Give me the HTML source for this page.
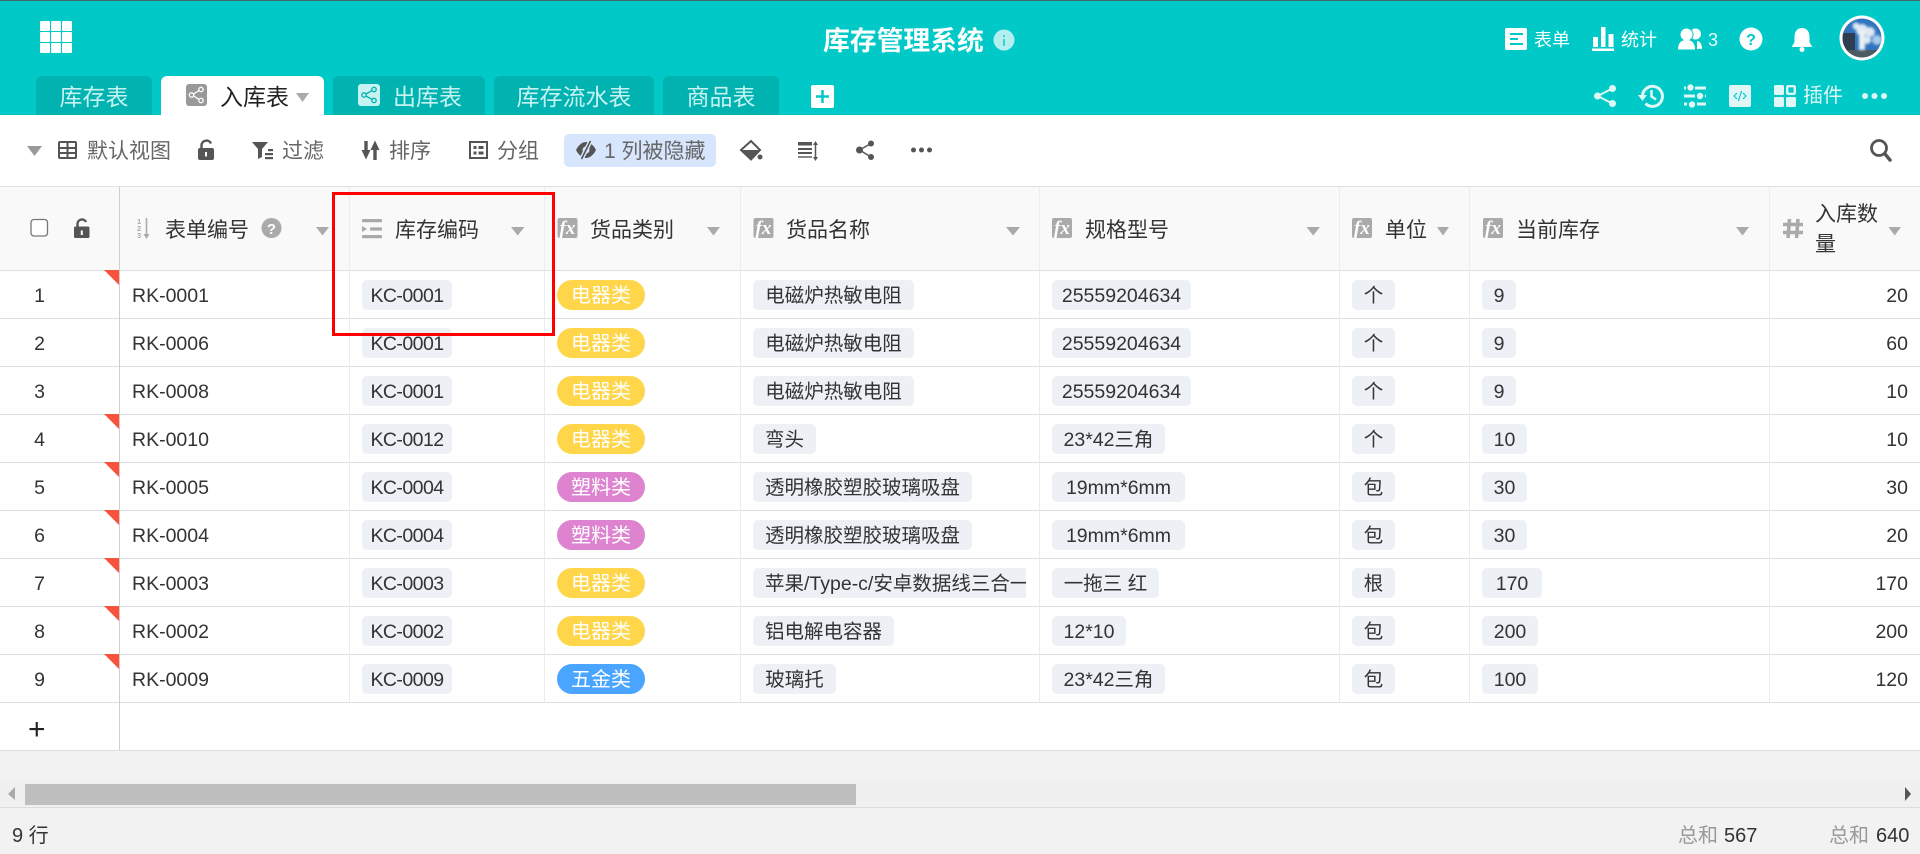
<!DOCTYPE html>
<html lang="zh-CN">
<head>
<meta charset="utf-8">
<title>库存管理系统</title>
<style>
html,body{margin:0;padding:0;width:1920px;height:854px;overflow:hidden;background:#fff}
body{position:relative;font-family:"Liberation Sans","Noto Sans CJK SC",sans-serif;color:#333}
.a{position:absolute;white-space:nowrap}
.hdr{position:absolute;left:0;top:0;width:1920px;height:115px;background:#00c9c8;border-top:1px solid #44696c;box-sizing:border-box}
.tab{position:absolute;top:76px;height:39px;background:#00b3b0;border-radius:6px 6px 0 0;color:#c6f3f2;font-size:23px;line-height:42px;overflow:hidden}
.tab.on{background:#fff;color:#222}
.tb{position:absolute;top:134px;height:33px;line-height:35px;font-size:21px;color:#666;white-space:nowrap}
.th{position:absolute;left:0;top:186px;width:1920px;height:83px;background:#f9f9f9;border-top:1px solid #e2e2e2;border-bottom:1px solid #dfdfdf;box-sizing:content-box}
.h{position:absolute;top:216px;line-height:30px;font-size:21px;color:#333;white-space:nowrap}
.vl{position:absolute;top:187px;width:1px;height:515px;background:#ececec}
.hl{position:absolute;left:0;width:1920px;height:1px;background:#dfdfdf}
.r{position:absolute;left:0;width:1920px;height:47px}
.r>div{position:absolute;white-space:nowrap;font-size:19.5px;line-height:32px;top:10px;height:30px}
.n{left:21px;width:37px;text-align:center}
.rk{left:132px}
.tg{background:#edf0f5;border-radius:5px;text-align:center;overflow:hidden}
.kc{left:362px;width:90px;letter-spacing:-.55px}
.c{left:557px;width:88px;border-radius:15px;text-align:center;color:#fff;font-size:20px !important;overflow:hidden}
.y{background:#ffd54a}.p{background:#dd83d0}.b{background:#49a5ff}
.nm{left:753px}.sp{left:1052px}.un{left:1352px;width:43px}.st{left:1482px}
.q{right:12px;text-align:right}
.fl{top:0 !important;left:104px;width:0;height:0 !important;border-top:15px solid #f9533f;border-left:15px solid transparent}
.ft{position:absolute;left:0;top:750px;width:1920px;height:104px;background:#f2f2f2}
</style>
</head>
<body>
<div class="hdr"></div>

<div class="tab" style="left:36px;width:116px;text-align:center">库存表</div>
<div class="tab on" style="left:161px;width:163px"><span class="a" style="left:59px;top:0">入库表</span></div>
<div class="tab" style="left:333px;width:152px"><span class="a" style="left:60px;top:0">出库表</span></div>
<div class="tab" style="left:494px;width:160px;text-align:center">库存流水表</div>
<div class="tab" style="left:663px;width:116px;text-align:center">商品表</div>

<div class="a" style="left:823px;top:24px;font-size:26.8px;line-height:34px;font-weight:bold;color:#fff">库存管理系统</div>
<div class="a" style="left:1534px;top:25px;font-size:18px;line-height:30px;color:#fff">表单</div>
<div class="a" style="left:1621px;top:25px;font-size:18px;line-height:30px;color:#fff">统计</div>
<div class="a" style="left:1708px;top:25px;font-size:18px;line-height:30px;color:#e6fbfb">3</div>
<div class="a" style="left:1803px;top:81px;font-size:20px;line-height:30px;color:#dff7f7">插件</div>

<div class="tb" style="left:87px">默认视图</div>
<div class="tb" style="left:282px">过滤</div>
<div class="tb" style="left:389px">排序</div>
<div class="tb" style="left:497px">分组</div>
<div class="tb" style="left:564px;width:152px;background:#d7e6fd;border-radius:5px"><span class="a" style="left:40px">1 列被隐藏</span></div>

<div class="th"></div>
<div class="h" style="left:165px">表单编号</div>
<div class="h" style="left:395px">库存编码</div>
<div class="h" style="left:590px">货品类别</div>
<div class="h" style="left:786px">货品名称</div>
<div class="h" style="left:1085px">规格型号</div>
<div class="h" style="left:1385px">单位</div>
<div class="h" style="left:1516px">当前库存</div>
<div class="h" style="left:1815px;top:200px;line-height:30px;white-space:normal;width:66px">入库数量</div>

<div class="hl" style="top:318px"></div>
<div class="hl" style="top:366px"></div>
<div class="hl" style="top:414px"></div>
<div class="hl" style="top:462px"></div>
<div class="hl" style="top:510px"></div>
<div class="hl" style="top:558px"></div>
<div class="hl" style="top:606px"></div>
<div class="hl" style="top:654px"></div>
<div class="hl" style="top:702px"></div>
<div class="vl" style="left:349px"></div>
<div class="vl" style="left:544px"></div>
<div class="vl" style="left:740px"></div>
<div class="vl" style="left:1039px"></div>
<div class="vl" style="left:1339px"></div>
<div class="vl" style="left:1469px"></div>
<div class="vl" style="left:1769px"></div>
<div class="vl" style="left:119px;height:563px;background:#cfcfcf"></div>

<div class="r" style="top:270px">
<div class="n">1</div><div class="fl"></div><div class="rk">RK-0001</div><div class="tg kc">KC-0001</div><div class="c y">电器类</div>
<div class="tg nm" style="width:161px">电磁炉热敏电阻</div><div class="tg sp" style="width:139px">25559204634</div><div class="tg un">个</div><div class="tg st" style="width:34px">9</div><div class="q">20</div></div>
<div class="r" style="top:318px">
<div class="n">2</div><div class="rk">RK-0006</div><div class="tg kc">KC-0001</div><div class="c y">电器类</div>
<div class="tg nm" style="width:161px">电磁炉热敏电阻</div><div class="tg sp" style="width:139px">25559204634</div><div class="tg un">个</div><div class="tg st" style="width:34px">9</div><div class="q">60</div></div>
<div class="r" style="top:366px">
<div class="n">3</div><div class="rk">RK-0008</div><div class="tg kc">KC-0001</div><div class="c y">电器类</div>
<div class="tg nm" style="width:161px">电磁炉热敏电阻</div><div class="tg sp" style="width:139px">25559204634</div><div class="tg un">个</div><div class="tg st" style="width:34px">9</div><div class="q">10</div></div>
<div class="r" style="top:414px">
<div class="n">4</div><div class="fl"></div><div class="rk">RK-0010</div><div class="tg kc">KC-0012</div><div class="c y">电器类</div>
<div class="tg nm" style="width:63px">弯头</div><div class="tg sp" style="width:113px">23*42三角</div><div class="tg un">个</div><div class="tg st" style="width:45px">10</div><div class="q">10</div></div>
<div class="r" style="top:462px">
<div class="n">5</div><div class="fl"></div><div class="rk">RK-0005</div><div class="tg kc">KC-0004</div><div class="c p">塑料类</div>
<div class="tg nm" style="width:219px">透明橡胶塑胶玻璃吸盘</div><div class="tg sp" style="width:133px">19mm*6mm</div><div class="tg un">包</div><div class="tg st" style="width:45px">30</div><div class="q">30</div></div>
<div class="r" style="top:510px">
<div class="n">6</div><div class="fl"></div><div class="rk">RK-0004</div><div class="tg kc">KC-0004</div><div class="c p">塑料类</div>
<div class="tg nm" style="width:219px">透明橡胶塑胶玻璃吸盘</div><div class="tg sp" style="width:133px">19mm*6mm</div><div class="tg un">包</div><div class="tg st" style="width:45px">30</div><div class="q">20</div></div>
<div class="r" style="top:558px">
<div class="n">7</div><div class="fl"></div><div class="rk">RK-0003</div><div class="tg kc">KC-0003</div><div class="c y">电器类</div>
<div class="tg nm" style="width:261px;padding-left:12px;text-align:left;border-radius:5px 0 0 5px">苹果/Type-c/安卓数据线三合一</div><div class="tg sp" style="width:107px">一拖三 红</div><div class="tg un">根</div><div class="tg st" style="width:60px">170</div><div class="q">170</div></div>
<div class="r" style="top:606px">
<div class="n">8</div><div class="fl"></div><div class="rk">RK-0002</div><div class="tg kc">KC-0002</div><div class="c y">电器类</div>
<div class="tg nm" style="width:141px">铝电解电容器</div><div class="tg sp" style="width:74px">12*10</div><div class="tg un">包</div><div class="tg st" style="width:56px">200</div><div class="q">200</div></div>
<div class="r" style="top:654px">
<div class="n">9</div><div class="fl"></div><div class="rk">RK-0009</div><div class="tg kc">KC-0009</div><div class="c b">五金类</div>
<div class="tg nm" style="width:83px">玻璃托</div><div class="tg sp" style="width:113px">23*42三角</div><div class="tg un">包</div><div class="tg st" style="width:56px">100</div><div class="q">120</div></div>

<div class="a" style="left:28px;top:715px;font-size:30px;line-height:30px;color:#222;font-weight:300">+</div>

<div class="ft">
<div class="a" style="left:0;top:0;width:1920px;height:1px;background:#dcdcdc"></div>
<div class="a" style="left:0;top:32px;width:1920px;height:25px;background:#f0f0f0"></div>
<div class="a" style="left:25px;top:34px;width:831px;height:21px;background:#bebebe"></div>
<div class="a" style="left:0;top:57px;width:1920px;height:1px;background:#dcdcdc"></div>
<div class="a" style="left:12px;top:71px;font-size:20px;line-height:30px;color:#333">9 行</div>
<div class="a" style="left:1678px;top:71px;font-size:20px;line-height:30px;color:#999">总和</div>
<div class="a" style="left:1724px;top:71px;font-size:20px;line-height:30px;color:#333">567</div>
<div class="a" style="left:1829px;top:71px;font-size:20px;line-height:30px;color:#999">总和</div>
<div class="a" style="left:1876px;top:71px;font-size:20px;line-height:30px;color:#333">640</div>
</div>

<svg class="a" style="left:0;top:0" width="1920" height="854" viewBox="0 0 1920 854" xmlns="http://www.w3.org/2000/svg">
<defs><clipPath id="av"><circle cx="1862" cy="38" r="19.5"/></clipPath><filter id="bl"><feGaussianBlur stdDeviation="1.4"/></filter></defs>

<!-- grid logo -->
<g fill="#fff">
<rect x="40" y="21" width="10" height="10" rx="1"/><rect x="51" y="21" width="10" height="10" rx="1"/><rect x="62" y="21" width="10" height="10" rx="1"/>
<rect x="40" y="32" width="10" height="10" rx="1"/><rect x="51" y="32" width="10" height="10" rx="1"/><rect x="62" y="32" width="10" height="10" rx="1"/>
<rect x="40" y="43" width="10" height="10" rx="1"/><rect x="51" y="43" width="10" height="10" rx="1"/><rect x="62" y="43" width="10" height="10" rx="1"/>
</g>

<!-- tab icons -->
<rect x="186" y="84" width="21" height="22" rx="3" fill="#999"/>
<g fill="none" stroke="#fff" stroke-width="1.3"><circle cx="191.5" cy="95" r="2.2"/><circle cx="201" cy="89.5" r="2.2"/><circle cx="201" cy="100.5" r="2.2"/><path d="M193.5 94 199 90.6M193.5 96 199 99.4"/></g>
<polygon points="296,93 309,93 302.5,102" fill="#aaa"/>
<rect x="358" y="84" width="22" height="22" rx="3" fill="#c6f3f2"/>
<g fill="none" stroke="#00b3b0" stroke-width="1.3"><circle cx="364" cy="95" r="2.2"/><circle cx="374" cy="89.5" r="2.2"/><circle cx="374" cy="100.5" r="2.2"/><path d="M366 94 372 90.6M366 96 372 99.4"/></g>
<rect x="811" y="85" width="23" height="23" rx="2" fill="#fff"/>
<path d="M822.5 90v13M816 96.5h13" stroke="#00c9c8" stroke-width="2.5"/>

<!-- info -->
<circle cx="1004" cy="40" r="10.5" fill="#fff" opacity=".7"/>
<rect x="1003" y="39" width="2" height="7" fill="#00c9c8" opacity=".7"/><rect x="1003" y="35" width="2" height="2" fill="#00c9c8" opacity=".7"/>

<!-- top right row 1 -->
<rect x="1505" y="28" width="22" height="22" rx="2" fill="#fff"/>
<path d="M1510 34h13M1510 39h8M1510 44h13" stroke="#00c9c8" stroke-width="2" fill="none"/>
<g fill="#fff"><rect x="1593" y="37" width="5" height="10"/><rect x="1601" y="27" width="4.5" height="20"/><rect x="1608.5" y="34" width="5" height="13"/><rect x="1592" y="48.500" width="22" height="2.500"/></g>
<g fill="#fff"><circle cx="1695.500" cy="34" r="5.500"/><path d="M1697 41c3 0 5 3 5 8h-5z"/><circle cx="1686.500" cy="34.500" r="6.500" stroke="#00c9c8"/><path d="M1678 49.500c0-7 3.500-9.500 8.500-9.500s8.500 2.500 8.500 9.500z"/></g>
<circle cx="1751" cy="39" r="11.500" fill="#fff"/>
<text x="1751" y="45" text-anchor="middle" font-family="Liberation Sans" font-weight="bold" font-size="16" fill="#00c9c8">?</text>
<path d="M1802 28c-5.500 0-7.500 4.500-7.500 9v4c0 3-2.500 4-2.500 6h20c0-2-2.500-3-2.500-6v-4c0-4.500-2-9-7.500-9z" fill="#fff"/><circle cx="1802" cy="49.500" r="2.500" fill="#fff"/>

<!-- avatar -->
<circle cx="1862" cy="38" r="22.500" fill="#fff"/>
<g clip-path="url(#av)">
<rect x="1840" y="16" width="44" height="44" fill="#2f74bd"/>
<rect x="1842" y="33" width="13" height="20" fill="#2f3d50"/>
<rect x="1840" y="50" width="44" height="10" fill="#4c5a62"/>
<g filter="url(#bl)" fill="#dfe9f3"><circle cx="1862" cy="30" r="6"/><circle cx="1870" cy="32" r="5"/><circle cx="1856" cy="26" r="3.500"/><circle cx="1877" cy="40" r="5" fill="#a8cbea"/><rect x="1859" y="30" width="6" height="20" fill="#eef2f6"/><circle cx="1867" cy="40" r="4"/></g>
</g>

<!-- top right row 2 -->
<g fill="#dff7f7">
<circle cx="1597.500" cy="96" r="3.500"/><circle cx="1612.500" cy="88.500" r="3.500"/><circle cx="1612.500" cy="103.500" r="3.500"/>
<path d="M1597.500 96 1612.500 88.500M1597.500 96 1612.500 103.500" stroke="#dff7f7" stroke-width="2"/>
<polygon points="1638,95 1647,95 1642.500,101"/>
<path d="M1642.500 97a10 10 0 1 1 3 6.500" fill="none" stroke="#dff7f7" stroke-width="3"/>
<path d="M1651.500 90v6.500l4.500 3" fill="none" stroke="#dff7f7" stroke-width="2.500"/>
<path d="M1684 88h2M1695 88h11M1684 96h11M1705 96h1M1684 104h3M1697 104h9" stroke="#dff7f7" stroke-width="3"/>
<circle cx="1690.500" cy="87.500" r="3.200"/><circle cx="1700" cy="96" r="3.200"/><circle cx="1692" cy="104.500" r="3.200"/>
<rect x="1729" y="85" width="22" height="22" rx="2"/>
<rect x="1774" y="85" width="10" height="10" rx="1.500"/><rect x="1774" y="97" width="10" height="10" rx="1.500"/><rect x="1786" y="97" width="10" height="10" rx="1.500"/>
<rect x="1787.200" y="86.200" width="7.600" height="7.600" rx="1" fill="none" stroke="#dff7f7" stroke-width="2.400"/>
<circle cx="1865" cy="96" r="3"/><circle cx="1874.500" cy="96" r="3"/><circle cx="1884" cy="96" r="3"/>
</g>
<path d="M1737 93l-3 3 3 3M1743 93l3 3-3 3M1741.500 91l-3 10" fill="none" stroke="#00c9c8" stroke-width="1.200"/>

<!-- toolbar -->
<polygon points="27,146 42,146 34.500,156" fill="#999"/>
<g fill="none" stroke="#555" stroke-width="2"><rect x="59" y="142" width="17" height="16" rx="1"/><path d="M59 148h17M59 153h17M67.500 142v16"/></g>
<path d="M201.500 149v-4a5 5 0 0 1 9.500-1.500" fill="none" stroke="#555" stroke-width="2.400"/><rect x="198" y="148" width="16" height="12" rx="2" fill="#555"/><rect x="205" y="152" width="2" height="4.500" fill="#fff"/>
<path d="M252 142h16l-6 7v8l-4 2v-10z" fill="#555"/>
<g fill="#555"><rect x="268" y="149" width="5" height="2.200"/><rect x="265" y="153" width="8" height="2.200"/><rect x="265" y="157" width="8" height="2.200"/></g>
<g fill="#555"><rect x="364.300" y="141" width="3.400" height="12"/><polygon points="361.500,150 370.500,150 366,159.500"/><rect x="373.300" y="148" width="3.400" height="12"/><polygon points="370.500,150 379.500,150 375,140.500"/></g>
<g fill="#555"><path d="M469 141h19v18h-19zM471 143v14h15v-14z" fill-rule="evenodd"/><rect x="473.500" y="146" width="3" height="3"/><rect x="478.500" y="146" width="5" height="3"/><rect x="473.500" y="151.500" width="3" height="3"/><rect x="478.500" y="151.500" width="5" height="3"/></g>
<path d="M576 150c3-6 7-8 10-8s7 2 10 8c-3 6-7 8-10 8s-7-2-10-8z" fill="#555"/>
<circle cx="586" cy="150" r="3.500" fill="#d7e6fd"/>
<path d="M581 160 591 140" stroke="#d7e6fd" stroke-width="4.500"/><path d="M581.500 159 590.500 141" stroke="#555" stroke-width="1.600"/>
<path d="M751 141 760 150 751 159.500 741 150z" fill="none" stroke="#555" stroke-width="2"/><path d="M741 150h19l-9 9.500z" fill="#555"/><circle cx="760" cy="157" r="2.500" fill="#555"/>
<g fill="#555"><rect x="798" y="142" width="14" height="3.500"/><rect x="798" y="148" width="14" height="2"/><rect x="798" y="152" width="14" height="2"/><rect x="798" y="156" width="14" height="2" fill="#888"/></g>
<path d="M815.500 143v16" stroke="#555" stroke-width="1.500"/><polygon points="813,145 818,145 815.500,141" fill="#555"/><polygon points="813,157 818,157 815.500,161" fill="#555"/>
<g fill="#555"><circle cx="859.500" cy="150" r="3.500"/><circle cx="871" cy="143.500" r="3"/><circle cx="871" cy="157" r="3"/><path d="M859.500 150 871 143.500M859.500 150 871 157" stroke="#555" stroke-width="1.500"/>
<circle cx="913.500" cy="150" r="2.500"/><circle cx="921.500" cy="150" r="2.500"/><circle cx="929.500" cy="150" r="2.500"/></g>
<circle cx="1879" cy="148" r="7.500" fill="none" stroke="#555" stroke-width="2.800"/><path d="M1885 154 1890 160" stroke="#555" stroke-width="3.500" stroke-linecap="round"/>

<!-- header controls -->
<rect x="31" y="219.500" width="16.500" height="16.500" rx="3" fill="#fff" stroke="#777" stroke-width="1.300"/>
<path d="M77.500 227.500v-4a4.500 4.500 0 0 1 8.500-1.500" fill="none" stroke="#555" stroke-width="2.400"/><rect x="74" y="226.500" width="15.500" height="11.500" rx="1.500" fill="#555"/><rect x="80.800" y="230.500" width="2" height="4.500" fill="#fff"/>
<g font-family="Liberation Sans" font-size="7.500" fill="#aaa" font-weight="bold"><text x="137" y="224">1</text><text x="137" y="231">2</text><text x="137" y="238">3</text></g>
<path d="M146.500 218v18" stroke="#aaa" stroke-width="1.600"/><polygon points="143.500,234 149.500,234 146.500,239" fill="#aaa"/>
<circle cx="271.500" cy="228" r="10" fill="#aaa"/><text x="271.500" y="234" text-anchor="middle" font-family="Liberation Sans" font-weight="bold" font-size="15" fill="#fff">?</text>
<g fill="#aaa"><rect x="362" y="219" width="20" height="3.200" rx="1"/><polygon points="362,226 367,229 362,232"/><rect x="370" y="227.400" width="12" height="3.200" rx="1"/><rect x="362" y="235" width="20" height="3.200" rx="1"/></g>

<g fill="#aaa">
<rect x="557.500" y="218" width="20" height="20" rx="2"/><rect x="753.500" y="218" width="20" height="20" rx="2"/><rect x="1052" y="218" width="20" height="20" rx="2"/><rect x="1352" y="218" width="20" height="20" rx="2"/><rect x="1483" y="218" width="20" height="20" rx="2"/>
<polygon points="316,227 329,227 322.500,235.500"/><polygon points="511,227 524.500,227 517.700,235.500"/><polygon points="707,227 720,227 713.500,235.500"/><polygon points="1006,227 1020,227 1013,235.500"/><polygon points="1306.500,227 1320,227 1313.200,235.500"/><polygon points="1437,227 1449,227 1443,235.500"/><polygon points="1736,227 1749,227 1742.500,235.500"/><polygon points="1888.500,227 1901,227 1894.700,235.500"/>
</g>
<g font-family="Liberation Serif" font-style="italic" font-weight="bold" font-size="19" fill="#fff">
<text x="559.500" y="234">fx</text><text x="755.500" y="234">fx</text><text x="1054" y="234">fx</text><text x="1354" y="234">fx</text><text x="1485" y="234">fx</text>
</g>
<path d="M1789.500 219 1788 238M1798 219 1796.500 238M1783 224.500h20M1783 232.500h20" stroke="#aaa" stroke-width="3.600" fill="none"/>

<!-- scroll arrows -->
<polygon points="15,787 15,800 8,794" fill="#aaa"/>
<polygon points="1905,787 1905,801 1911,794" fill="#555"/>

<!-- red highlight -->
<rect x="333.500" y="193.500" width="220" height="141" fill="none" stroke="#f00" stroke-width="3"/>
</svg>
</body>
</html>
